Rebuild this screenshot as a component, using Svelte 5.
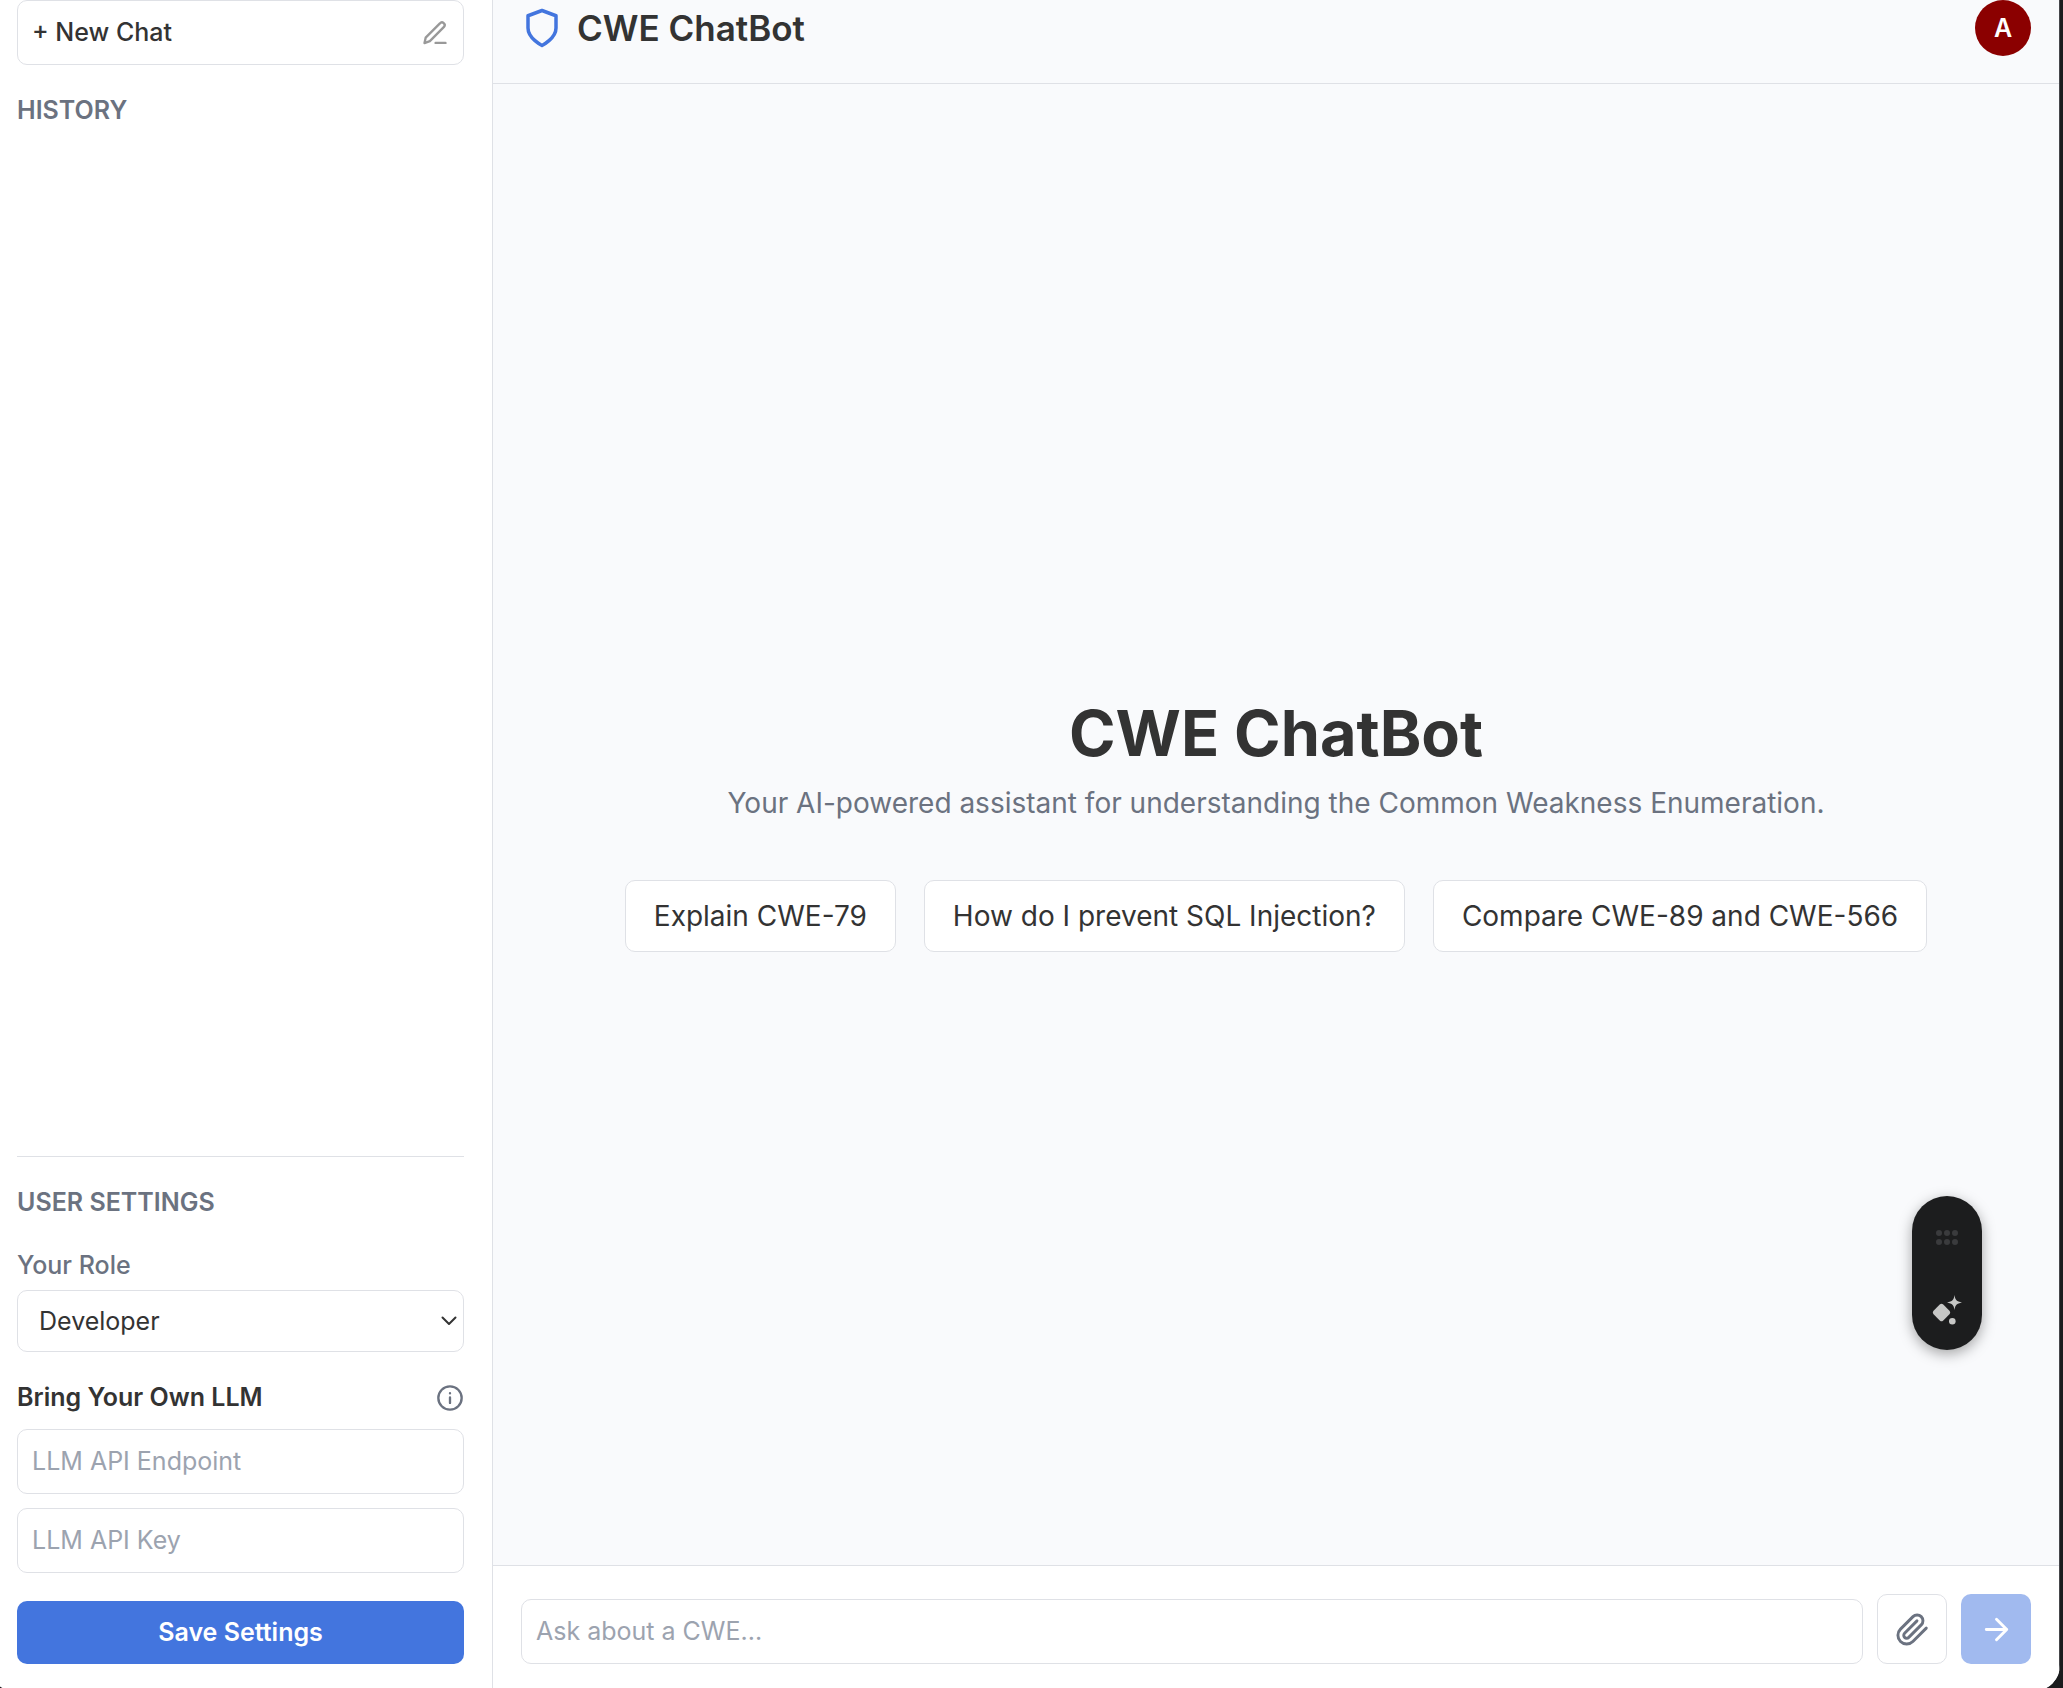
<script>
  const prompts = [
    'Explain CWE-79',
    'How do I prevent SQL Injection?',
    'Compare CWE-89 and CWE-566'
  ];
  let role = $state('Developer');
  let endpoint = $state('');
  let apiKey = $state('');
  let message = $state('');
</script>

<div class="app">
  <aside class="sidebar">
    <button class="new-chat" type="button">
      <span>+ New Chat</span>
      <svg class="icon-sm" viewBox="0 0 24 24" aria-hidden="true">
        <path d="M12.5 20.5H21" />
        <path d="M16.2 3.8a2.3 2.3 0 0 1 3.5 3L7.6 19 3 20.6 4 16z" />
      </svg>
    </button>
    <nav class="history" aria-label="Chat history">
      <h2>HISTORY</h2>
    </nav>
    <form class="settings" onsubmit={(e) => e.preventDefault()}>
      <h2>USER SETTINGS</h2>
      <label class="role-label" for="role">Your Role</label>
      <div class="select-wrap">
        <select id="role" bind:value={role}>
          <option>Developer</option>
          <option>PSIRT Member</option>
          <option>Academic Researcher</option>
        </select>
        <svg class="chevron" viewBox="0 0 16 10" aria-hidden="true"><path d="M1.5 1.5 8 8l6.5-6.5" /></svg>
      </div>
      <div class="llm-head">
        <h3>Bring Your Own LLM</h3>
        <button class="info" type="button" aria-label="About custom models">
          <svg viewBox="0 0 24 24" aria-hidden="true">
            <circle cx="12" cy="12" r="10" />
            <path d="M12 16.2V11.6M12 7.9v.2" />
          </svg>
        </button>
      </div>
      <div class="fields">
        <input type="text" aria-label="LLM API Endpoint" placeholder="LLM API Endpoint" bind:value={endpoint} />
        <input type="password" aria-label="LLM API Key" placeholder="LLM API Key" bind:value={apiKey} />
      </div>
      <button class="save" type="submit">Save Settings</button>
    </form>
  </aside>

  <main class="main">
    <header class="topbar">
      <div class="brand">
        <svg viewBox="0 0 24 24" aria-hidden="true">
          <path d="M12 22s8-4 8-10V5l-8-3-8 3v7c0 6 8 10 8 10z" />
        </svg>
        <span>CWE ChatBot</span>
      </div>
      <button class="avatar" type="button" aria-label="Account A">A</button>
    </header>

    <section class="hero">
      <h1>CWE ChatBot</h1>
      <p>Your AI-powered assistant for understanding the Common Weakness Enumeration.</p>
      <div class="prompts">
        {#each prompts as prompt}
          <button type="button" onclick={() => (message = prompt)}>{prompt}</button>
        {/each}
      </div>
    </section>

    <form class="composer" onsubmit={(e) => e.preventDefault()}>
      <input type="text" aria-label="Ask about a CWE" placeholder="Ask about a CWE..." bind:value={message} />
      <button class="attach" type="button" aria-label="Attach file">
        <svg viewBox="0 0 24 24" aria-hidden="true">
          <path d="m21.44 11.05-9.19 9.19a6 6 0 0 1-8.49-8.49l8.57-8.57A4 4 0 1 1 18 8.84l-8.59 8.57a2 2 0 0 1-2.83-2.83l8.49-8.48" />
        </svg>
      </button>
      <button class="send" type="submit" aria-label="Send">
        <svg viewBox="0 0 24 24" aria-hidden="true"><path d="M5 12h14M12 5l7 7-7 7" /></svg>
      </button>
    </form>
  </main>
</div>

<div class="assist">
  <svg class="grip" viewBox="0 0 24 16" aria-hidden="true">
    <circle cx="4" cy="4" r="3" /><circle cx="12" cy="4" r="3" /><circle cx="20" cy="4" r="3" />
    <circle cx="4" cy="13" r="3" /><circle cx="12" cy="13" r="3" /><circle cx="20" cy="13" r="3" />
  </svg>
  <button type="button" aria-label="Assistant">
    <svg viewBox="0 0 30 30" aria-hidden="true">
      <path d="M8 9.3q1.5-1.3 3 0l6.7 6.7q1 1.5 0 3l-6.7 6.7q-1.5 1.2-3 0l-6.7-6.7q-1-1.5 0-3z" />
      <path d="M22.5 0c.8 5 2 6.5 7.5 7.5-5.5 1-6.7 2.5-7.5 7.5-.8-5-2-6.5-7.5-7.5 5.5-1 6.7-2.5 7.5-7.5z" />
      <circle cx="20.3" cy="26.3" r="3.3" />
    </svg>
  </button>
</div>

<style>
  :global(body) {
    background: #1b1c1e;
  }
  :global(*) {
    box-sizing: border-box;
  }
  .app {
    display: flex;
    min-height: 100vh;
    margin-right: 3px;
    border-right: 1px solid #45464a;
    background: #f9fafc;
    color: #333;
    font-family: Inter, 'Liberation Sans', sans-serif;
    font-size: 25px;
    line-height: 35px;
    clip-path: inset(0 0 -3px -11px round 0 0 26px 26px);
  }
  button,
  input,
  select {
    margin: 0;
    font: inherit;
    color: inherit;
    cursor: pointer;
  }
  h1,
  h2,
  h3,
  p {
    margin: 0;
  }
  svg {
    display: block;
    flex: none;
    fill: none;
    stroke: currentColor;
    stroke-width: 2;
    stroke-linecap: round;
    stroke-linejoin: round;
  }
  input,
  select {
    display: block;
    width: 100%;
    border: 1px solid #dfe1e6;
    border-radius: 10px;
    background: #fff;
    padding: 14px;
    cursor: text;
  }
  input::placeholder {
    color: #9ca3af;
    opacity: 1;
  }
  .sidebar {
    display: flex;
    flex: none;
    flex-direction: column;
    width: 493px;
    padding: 0 28px 24px 17px;
    border-right: 1px solid #dfe1e6;
    background: #fff;
  }
  .new-chat {
    display: flex;
    align-items: center;
    justify-content: space-between;
    padding: 14px;
    border: 1px solid #dfe1e6;
    border-radius: 10px;
    background: #fff;
    font-weight: 500;
  }
  .icon-sm {
    width: 28px;
    height: 28px;
    color: #999;
  }
  .history {
    flex: 1;
    padding-top: 28px;
  }
  h2 {
    color: #6b7280;
    font-size: 25px;
    font-weight: 600;
  }
  .settings {
    display: flex;
    flex-direction: column;
    padding-top: 28px;
    border-top: 1px solid #dfe1e6;
  }
  .role-label {
    margin: 28px 0 7px;
    color: #6b7280;
    font-weight: 500;
  }
  .select-wrap {
    display: grid;
    align-items: center;
  }
  .select-wrap > * {
    grid-area: 1 / 1;
  }
  select {
    appearance: none;
    height: 62px;
    padding: 0 40px 0 21px;
    cursor: pointer;
  }
  .chevron {
    justify-self: end;
    width: 16px;
    height: 10px;
    margin-right: 7px;
    pointer-events: none;
  }
  .llm-head {
    display: flex;
    align-items: center;
    justify-content: space-between;
    margin: 28px 0 14px;
  }
  h3 {
    font-size: 25px;
    font-weight: 600;
  }
  .info {
    padding: 0;
    border: 0;
    background: none;
    color: #6b7280;
  }
  .info svg {
    width: 28px;
    height: 28px;
  }
  .fields {
    display: flex;
    flex-direction: column;
    gap: 14px;
  }
  .save {
    height: 63px;
    margin-top: 28px;
    border: 0;
    border-radius: 10px;
    background: #4375de;
    color: #fff;
    font-weight: 600;
  }
  .main {
    display: flex;
    flex: 1;
    flex-direction: column;
    min-width: 0;
  }
  .topbar {
    display: flex;
    align-items: center;
    justify-content: space-between;
    padding: 0 28px 27px;
    border-bottom: 1px solid #dfe1e6;
  }
  .brand {
    display: flex;
    align-items: center;
    gap: 14px;
    font-size: 35px;
    font-weight: 600;
    line-height: 42px;
  }
  .brand svg {
    width: 42px;
    height: 42px;
    color: #4375de;
  }
  .avatar {
    width: 56px;
    height: 56px;
    padding: 0;
    border: 0;
    border-radius: 50%;
    background: #8b0000;
    color: #fff;
    font-weight: 600;
  }
  .hero {
    display: flex;
    flex: 1;
    flex-direction: column;
    align-items: center;
    justify-content: center;
    padding: 28px;
    text-align: center;
  }
  h1 {
    font-size: 63px;
    font-weight: 700;
    line-height: 70px;
  }
  .hero p {
    margin: 14px 0 56px;
    color: #6b7280;
    font-size: 28px;
    line-height: 42px;
  }
  .prompts {
    display: flex;
    flex-wrap: wrap;
    justify-content: center;
    gap: 28px;
  }
  .prompts button {
    padding: 14px 28px;
    border: 1px solid #dfe1e6;
    border-radius: 10px;
    background: #fff;
    font-size: 28px;
    line-height: 42px;
  }
  .composer {
    display: flex;
    align-items: flex-end;
    gap: 14px;
    padding: 28px 28px 24px;
    border-top: 1px solid #dfe1e6;
    background: #fff;
  }
  .composer input {
    flex: 1;
    min-width: 0;
  }
  .composer button {
    display: grid;
    flex: none;
    place-items: center;
    width: 70px;
    height: 70px;
    padding: 0;
    border: 0;
    border-radius: 10px;
  }
  .composer .attach {
    border: 1px solid #dfe1e6;
    background: #fff;
    color: #6b7280;
  }
  .composer .send {
    background: #a1baef;
    color: #fff;
  }
  .composer svg {
    width: 35px;
    height: 35px;
  }
  .assist {
    position: fixed;
    right: 81px;
    bottom: 338px;
    display: flex;
    flex-direction: column;
    align-items: center;
    justify-content: space-between;
    width: 70px;
    height: 154px;
    padding: 33px 0 25px;
    border-radius: 35px;
    background: #1c1d1e;
    box-shadow: 0 4px 14px rgb(0 0 0 / 35%);
  }
  .assist svg {
    fill: currentColor;
    stroke: none;
  }
  .grip {
    width: 24px;
    height: 16px;
    color: #3a3b3d;
  }
  .assist button {
    padding: 0;
    border: 0;
    background: none;
    color: #c6c7c6;
  }
  .assist button svg {
    width: 30px;
    height: 30px;
  }
</style>
